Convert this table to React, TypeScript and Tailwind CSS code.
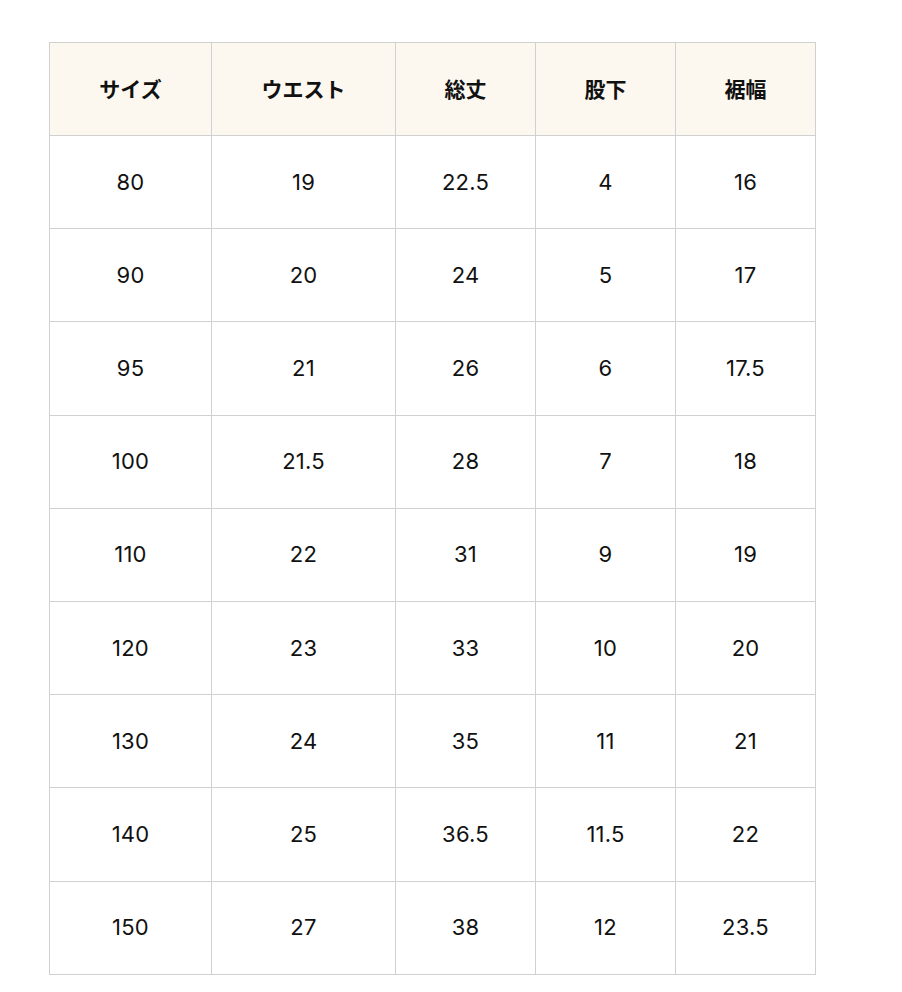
import React from 'react';

const headers = ['サイズ', 'ウエスト', '総丈', '股下', '裾幅'];

const rows: string[][] = [
  ['80', '19', '22.5', '4', '16'],
  ['90', '20', '24', '5', '17'],
  ['95', '21', '26', '6', '17.5'],
  ['100', '21.5', '28', '7', '18'],
  ['110', '22', '31', '9', '19'],
  ['120', '23', '33', '10', '20'],
  ['130', '24', '35', '11', '21'],
  ['140', '25', '36.5', '11.5', '22'],
  ['150', '27', '38', '12', '23.5'],
];

const widths = ['w-[162px]', 'w-[184px]', 'w-[140px]', 'w-[140px]', 'w-[140px]'];

const App: React.FC = () => {
  return (
    <div className="min-h-screen bg-white pt-[42px] pl-[49px] font-['Noto_Sans_CJK_JP',sans-serif] text-[#111]">
      <table className="border-collapse table-fixed w-[767px]">
        <thead>
          <tr className="h-[93px] bg-[#fcf8f0]">
            {headers.map((h, i) => (
              <th
                key={h}
                className={`${widths[i]} border border-[#d0d0d0] text-[21px] font-bold text-center align-middle`}
              >
                {h}
              </th>
            ))}
          </tr>
        </thead>
        <tbody>
          {rows.map((r, ri) => (
            <tr key={ri} className="h-[93.2px]">
              {r.map((c, ci) => (
                <td
                  key={ci}
                  className="border border-[#d0d0d0] text-[22px] text-center align-middle font-['Inter',sans-serif] tracking-[0.01em]"
                >
                  {c}
                </td>
              ))}
            </tr>
          ))}
        </tbody>
      </table>
    </div>
  );
};

export default App;
